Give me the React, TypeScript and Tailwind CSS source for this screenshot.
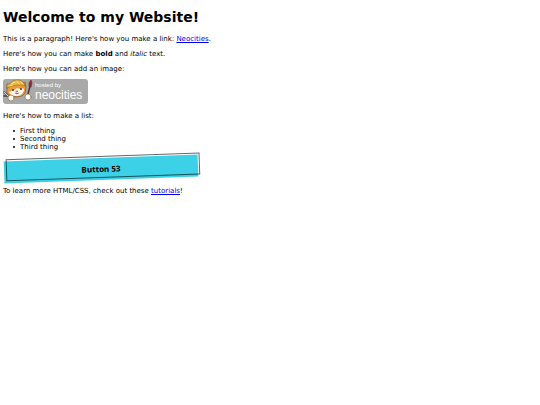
import React from "react";

function HostedBadge() {
  return (
    <svg viewBox="0 0 85 25" className="block h-[25px] w-[85px]" role="img" aria-label="Hosted by Neocities">
      <rect width="85" height="25" rx="3" fill="#a9a9a9" />
      <g strokeLinejoin="round" strokeLinecap="round">
        <path d="M1 13l6 6M1 17l3 0" stroke="#5c5c5c" strokeWidth="1.8" />
        <path d="M1 13l5 5" stroke="#e4e4e4" strokeWidth="0.9" />
        <path d="M4 11l0-6 4 1 9-1 5-2 1 6-1 5-3 3-5 1-6-1-4-3z" fill="#ee9a3c" stroke="#6b4320" strokeWidth="0.6" />
        <path d="M4 9l0-4 3 0c1-3 4-4 8-4 3 0 6 2 7 6-6-2-12-1-18 2z" fill="#e9bb45" stroke="#8a6420" strokeWidth="0.6" />
        <path d="M8 5l4-2M14 2l2 3M18 3l2 2M7 7l3-1" stroke="#fbe49a" strokeWidth="0.8" />
        <path d="M6 13c3-2 5-1 8-4 2 2 5-1 7 1 0 4-3 7-7 7s-7-1-8-4z" fill="#fff8ea" />
        <circle cx="10" cy="11" r="0.9" fill="#3b2416" />
        <circle cx="18" cy="10" r="0.9" fill="#3b2416" />
        <path d="M13 12h2l-1 1zM12 14q2 2 4 0" fill="#9c4a35" stroke="#9c4a35" strokeWidth="0.5" />
        <path d="M25 15l2-8" stroke="#5b3428" strokeWidth="1.5" />
        <path d="M26 7l0-3 2-3 1 3-1 4z" fill="#a52c2c" stroke="#5b2b20" strokeWidth="0.6" />
        <circle cx="8" cy="19" r="3" fill="#fffaf0" stroke="#7b5f45" strokeWidth="0.6" />
        <circle cx="25" cy="18" r="3" fill="#fffaf0" stroke="#7b5f45" strokeWidth="0.6" />
      </g>
      <text x="32" y="8" fill="#fff" fontSize="6" fontFamily="'Liberation Sans', sans-serif">hosted by</text>
      <text x="32" y="20" fill="#fff" fontSize="12" fontFamily="'Liberation Sans', sans-serif">neocities</text>
    </svg>
  );
}

const things = ["First thing", "Second thing", "Third thing"];

export default function App() {
  return (
    <main className="flex flex-col items-start gap-[7px] bg-white px-[3px] py-[9px] font-['DejaVu_Sans',sans-serif] text-[7px] leading-[8px] text-black">
      <h1 className="mb-[2px] text-[14px] leading-[17px] font-bold">Welcome to my Website!</h1>
      <p>
        This is a paragraph! Here's how you make a link:{" "}
        <a href="#neocities" className="text-[#0000ee] underline">Neocities</a>.
      </p>
      <p>
        Here's how you can make <strong className="font-bold">bold</strong> and <em>italic</em> text.
      </p>
      <div className="flex flex-col gap-[6px] pb-px">
        <p>Here's how you can add an image:</p>
        <HostedBadge />
      </div>
      <p>Here's how to make a list:</p>
      <ul className="pl-[10px]">
        {things.map((thing) => (
          <li key={thing} className="flex items-center gap-[5px] before:size-[2px] before:rounded-full before:bg-black before:content-['']">
            {thing}
          </li>
        ))}
      </ul>
      <button
        type="button"
        className="relative ml-px h-[22px] w-full max-w-[194px] -rotate-2 bg-[#3dd1e7] font-['Open_Sans',sans-serif] text-[8px] leading-[12px] font-bold after:absolute after:bottom-[2px] after:left-[2px] after:h-full after:w-full after:border after:border-black/60 after:content-['']"
      >
        Button 53
      </button>
      <p>
        To learn more HTML/CSS, check out these{" "}
        <a href="#tutorials" className="text-[#0000ee] underline">tutorials</a>!
      </p>
    </main>
  );
}
